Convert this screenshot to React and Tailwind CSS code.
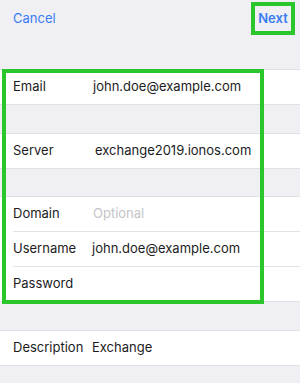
import React from 'react';

const font = { fontFamily: 'Inter, "Liberation Sans", sans-serif' };

function Row({ label, value, placeholder, gap = 'w-[80px]', inset }) {
  return (
    <div className="relative flex h-[34px] items-center bg-white pl-[13px] text-[13px] text-[#1c1c1e]">
      <span className={`shrink-0 ${gap}`}>{label}</span>
      {value && <span>{value}</span>}
      {placeholder && <span className="text-[#c4c4c7]">{placeholder}</span>}
      {inset && <div className="absolute bottom-[-1px] left-[13px] right-0 h-px bg-[#e3e3e6]" />}
    </div>
  );
}

function Group({ children }) {
  return <div className="flex flex-col gap-px border-y border-[#e0e0e4] bg-white">{children}</div>;
}

export default function App() {
  return (
    <div className="flex h-[383px] w-[300px] flex-col overflow-hidden bg-[#efeff4]" style={font}>
      {/* Nav */}
      <div className="flex h-[69px] items-start justify-between pl-[13px] pr-[5px] pt-[2px]">
        <div className="flex h-[33px] items-center text-[13px] text-[#3a7df5]">Cancel</div>
        <div className="flex h-[33px] w-[44px] items-center justify-center border-4 border-[#2bc62b]">
          <span className="text-[13px] font-semibold text-[#3a7df5]">Next</span>
        </div>
      </div>

      <div className="relative flex flex-col">
        <Group>
          <Row label="Email" value="john.doe@example.com" />
        </Group>
        <div className="h-[28px]" />
        <Group>
          <Row label="Server" value="exchange2019.ionos.com" gap="w-[82px]" />
        </Group>
        <div className="h-[27px]" />
        <Group>
          <Row label="Domain" placeholder="Optional" inset />
          <Row label="Username" value="john.doe@example.com" gap="w-[79px]" inset />
          <Row label="Password" />
        </Group>
        {/* highlight box over the account fields */}
        <div className="pointer-events-none absolute left-[2px] top-0 h-[235px] w-[262px] border-4 border-[#2bc62b]" />
      </div>

      <div className="h-[28px]" />
      <Group>
        <Row label="Description" value="Exchange" gap="w-[79px]" />
      </Group>
    </div>
  );
}
